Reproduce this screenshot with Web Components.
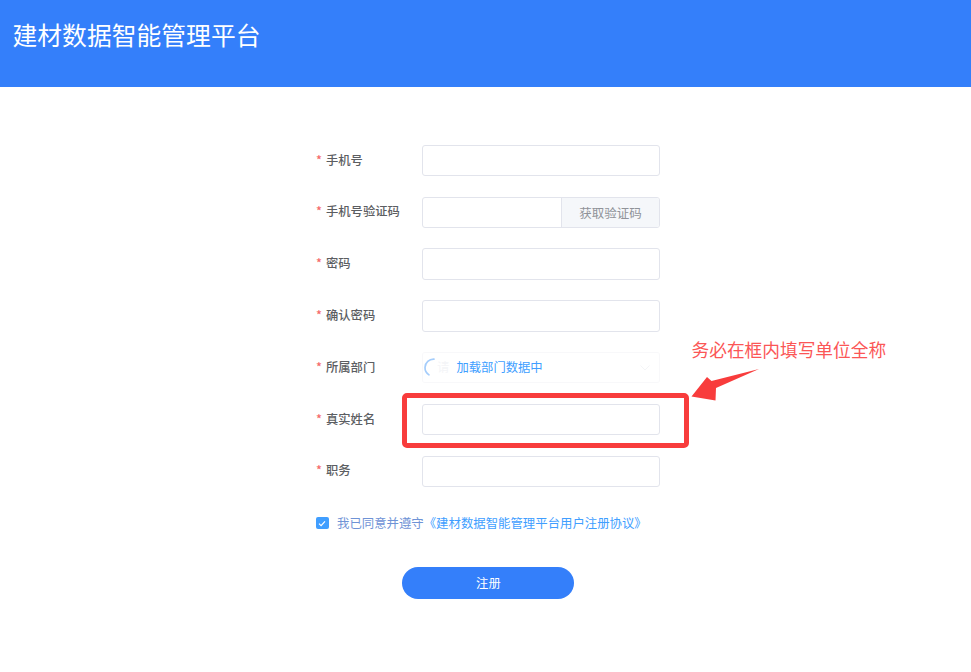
<!DOCTYPE html>
<html lang="zh">
<head>
<meta charset="utf-8">
<title>建材数据智能管理平台</title>
<style>
  html, body { margin: 0; height: 100%; background: #fff; }
  body { font-family: "Noto Sans CJK SC", "Liberation Sans", sans-serif; overflow: hidden; }
</style>
</head>
<body>
<app-page>
  <app-header slot="header">建材数据智能管理平台</app-header>
  <register-form>
    <form-field label="手机号"><text-input></text-input></form-field>
    <form-field label="手机号验证码"><text-input append="获取验证码"></text-input></form-field>
    <form-field label="密码"><text-input></text-input></form-field>
    <form-field label="确认密码"><text-input></text-input></form-field>
    <form-field label="所属部门"><loading-select placeholder="请" loading="加载部门数据中"></loading-select></form-field>
    <form-field label="真实姓名"><text-input></text-input></form-field>
    <form-field label="职务"><text-input></text-input></form-field>
    <agree-check slot="footer" prefix="我已同意并遵守" link="《建材数据智能管理平台用户注册协议》"></agree-check>
    <pill-button slot="footer">注册</pill-button>
  </register-form>
  <red-note slot="overlay">务必在框内填写单位全称</red-note>
</app-page>

<script>
// small helper, every element gets an open shadow root from a string
function shadow(el, html) {
  el.attachShadow({ mode: 'open' }).innerHTML = html;
}

class AppPage extends HTMLElement {
  constructor() {
    super();
    shadow(this, `
      <style>
        :host { display: block; position: relative; height: 672px; overflow: hidden; }
      </style>
      <slot name="header"></slot>
      <slot></slot>
      <slot name="overlay"></slot>`);
  }
}

class AppHeader extends HTMLElement {
  constructor() {
    super();
    shadow(this, `
      <style>
        :host { display: block; box-sizing: border-box; height: 87px; padding: 15px 0 0 12.5px; background: #347ffa; }
        span { display: block; color: #fff; font-size: 24.8px; line-height: 38px; white-space: nowrap; }
      </style>
      <span><slot></slot></span>`);
  }
}

class RegisterForm extends HTMLElement {
  constructor() {
    super();
    shadow(this, `
      <style>
        :host { display: block; padding: 57.8px 0 0 316px; width: 344px; }
        .rows { display: flex; flex-direction: column; gap: 20.3px; }
        .footer { display: flex; flex-direction: column; align-items: flex-start; }
      </style>
      <div class="rows"><slot></slot></div>
      <div class="footer"><slot name="footer"></slot></div>`);
  }
}

class FormField extends HTMLElement {
  constructor() {
    super();
    shadow(this, `
      <style>
        :host { display: grid; grid-template-columns: 106px 238px; height: 31.5px; align-items: center; }
        .label { color: #5c5e62; font-size: 12.3px; font-weight: 500; white-space: nowrap; display: flex; align-items: center; margin-top: -2px; }
        .star { color: #f56c6c; width: 10px; font-size: 12.3px; }
      </style>
      <div class="label"><span class="star">*</span><span class="text"></span></div>
      <slot></slot>`);
    this.shadowRoot.querySelector('.text').textContent = this.getAttribute('label');
  }
}

class TextInput extends HTMLElement {
  constructor() {
    super();
    shadow(this, `
      <style>
        :host { display: flex; box-sizing: border-box; height: 31.5px; border: 1px solid #e2e4ec; border-radius: 3px; background: #fff; overflow: hidden; }
        input { flex: 1; min-width: 0; border: 0; outline: 0; padding: 0 10px; background: transparent; font: inherit; }
        .append { display: flex; align-items: center; justify-content: center; width: 98px; box-sizing: border-box; border-left: 1px solid #e2e4ec; background: #f5f7fa; color: #909399; font-size: 12.5px; padding-top: 1px; white-space: nowrap; }
      </style>
      <input type="text">`);
    const append = this.getAttribute('append');
    if (append) {
      const div = document.createElement('div');
      div.className = 'append';
      div.textContent = append;
      this.shadowRoot.appendChild(div);
    }
  }
}

class LoadingSelect extends HTMLElement {
  constructor() {
    super();
    shadow(this, `
      <style>
        :host { display: block; position: relative; box-sizing: border-box; height: 31.5px; border: 1px solid #f8f8fa; border-radius: 3px; background: #fff; font-size: 12.3px; }
        .ph { position: absolute; left: 14px; top: 0; line-height: 29.5px; color: #e6e8ee; }
        .chev { position: absolute; right: 9px; top: 12px; }
        .mask { position: absolute; inset: 0; display: flex; align-items: center; background: rgba(255,255,255,.55); }
        .spin { position: absolute; left: 0; top: 5px; }
        .txt { position: absolute; left: 33.5px; top: 0; line-height: 29.5px; color: #409eff; white-space: nowrap; }
      </style>
      <span class="ph"></span>
      <svg class="chev" width="10" height="6" viewBox="0 0 10 6"><path d="M.5.5 5 5 9.5.5" fill="none" stroke="#e6e8ee" stroke-width="1"/></svg>
      <div class="mask">
        <svg class="spin" width="20" height="20" viewBox="0 0 20 20"><path d="M11 1.2A8.6 8.6 0 0 0 2 9.5a8.6 8.6 0 0 0 4 7.4" fill="none" stroke="#a5cdfb" stroke-width="1.7" stroke-linecap="round"/></svg>
        <span class="txt"></span>
      </div>`);
    this.shadowRoot.querySelector('.ph').textContent = this.getAttribute('placeholder');
    this.shadowRoot.querySelector('.txt').textContent = this.getAttribute('loading');
  }
}

class AgreeCheck extends HTMLElement {
  constructor() {
    super();
    shadow(this, `
      <style>
        :host { display: flex; align-items: center; margin-top: 20px; height: 32px; font-size: 12.4px; white-space: nowrap; }
        .box { width: 12.5px; height: 12.5px; border-radius: 2px; background: #409eff; display: flex; align-items: center; justify-content: center; margin-right: 8.5px; flex: none; }
        .pre { color: #6f93d6; }
        .link { color: #409eff; }
      </style>
      <span class="box"><svg width="8" height="7" viewBox="0 0 8 7"><path d="M1 3.6 3.1 5.6 7 1.4" fill="none" stroke="#fff" stroke-width="1.2"/></svg></span>
      <span class="pre"></span><span class="link"></span>`);
    this.shadowRoot.querySelector('.pre').textContent = this.getAttribute('prefix');
    this.shadowRoot.querySelector('.link').textContent = this.getAttribute('link');
  }
}

class PillButton extends HTMLElement {
  constructor() {
    super();
    shadow(this, `
      <style>
        :host { display: flex; align-items: center; justify-content: center; box-sizing: border-box; width: 172px; height: 32px; margin: 28.4px 0 0 86.4px; border-radius: 16px; background: #347ffa; color: #fff; font-size: 12.3px; cursor: pointer; }
      </style>
      <slot></slot>`);
  }
}

// hand drawn marks on top of the screenshot: red box, arrow and the note
class RedNote extends HTMLElement {
  constructor() {
    super();
    shadow(this, `
      <style>
        :host { display: block; position: absolute; left: 0; top: 0; width: 971px; height: 672px; pointer-events: none; }
        .box { position: absolute; left: 402px; top: 393px; width: 286.5px; height: 55px; box-sizing: border-box; border: 5px solid #f83c3c; border-radius: 5px; }
        .note { position: absolute; left: 691.5px; top: 336px; color: #fb5656; font-size: 17.7px; line-height: 26px; white-space: nowrap; }
        svg { position: absolute; left: 685px; top: 365px; }
      </style>
      <div class="box"></div>
      <div class="note"><slot></slot></div>
      <svg width="80" height="40" viewBox="685 365 80 40"><path d="M691.5 396.5 707 377 711.5 381 759 369 716 388 715.5 400.5Z" fill="#f83c3c"/></svg>`);
  }
}

customElements.define('app-page', AppPage);
customElements.define('app-header', AppHeader);
customElements.define('register-form', RegisterForm);
customElements.define('form-field', FormField);
customElements.define('text-input', TextInput);
customElements.define('loading-select', LoadingSelect);
customElements.define('agree-check', AgreeCheck);
customElements.define('pill-button', PillButton);
customElements.define('red-note', RedNote);
</script>
</body>
</html>
